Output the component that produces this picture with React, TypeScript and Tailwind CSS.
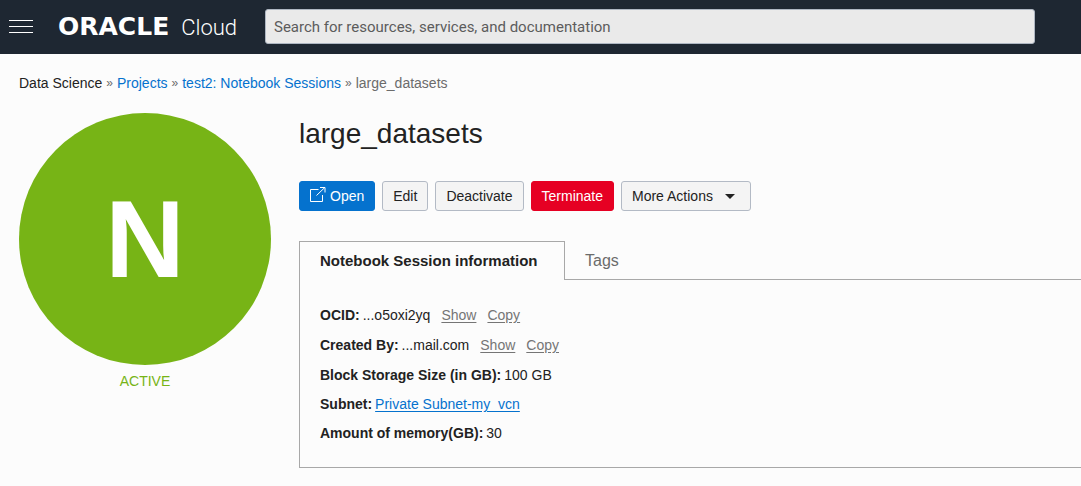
import type { ReactNode } from "react";

const linkMuted = "text-[#757575] underline underline-offset-2";

function Action({ children, className }: { children: ReactNode; className: string }) {
  return (
    <button
      type="button"
      className={`flex h-[30px] items-center whitespace-nowrap rounded-[3px] border px-2.5 ${className}`}
    >
      {children}
    </button>
  );
}

const neutral = "border-[#b3bac5] bg-[#f4f4f4] text-[#222]";

function OpenIcon() {
  return (
    <svg className="mr-1 mb-0.5 size-4" viewBox="0 0 16 16" fill="none" stroke="currentColor" aria-hidden="true">
      <path d="M8.500 2.500H.5v12h12V8M6.500 8.500L14.500 .8M10 .5h5v5" />
    </svg>
  );
}

function Row({ label, children }: { label: string; children: ReactNode }) {
  return (
    <div className="flex items-baseline gap-[3px] leading-5">
      <dt className="font-bold">{label}</dt>
      <dd className="flex gap-[11px]">{children}</dd>
    </div>
  );
}

function MaskedValue({ value }: { value: string }) {
  return (
    <>
      <span className="leading-[21px]">{value}</span>
      <a href="#show" className={linkMuted}>Show</a>
      <a href="#copy" className={linkMuted}>Copy</a>
    </>
  );
}

export default function App() {
  return (
    <div className="min-h-screen bg-[#fcfcfc] font-['Liberation_Sans',Arial,sans-serif] text-sm text-[#222]">
      <header className="flex h-[54px] items-center bg-[#1e2732] pr-[46px] pb-px pl-[9px]">
        <button type="button" aria-label="Open navigation menu" className="mr-[25px] shrink-0 text-white">
          <svg className="block h-[15px] w-6" viewBox="0 0 24 15" fill="currentColor" aria-hidden="true">
            <rect y="1" width="24" height="1" />
            <rect y="7" width="24" height="1" />
            <rect y="13" width="24" height="1" />
          </svg>
        </button>
        <a href="#home" className="flex w-[207px] shrink-0 items-baseline gap-3 whitespace-nowrap text-white">
          <span className="font-['DejaVu_Sans',sans-serif] text-[25px] font-bold">ORACLE</span>
          <span className="font-[Roboto,sans-serif] text-[22px] font-light">Cloud</span>
        </a>
        <input
          type="search"
          aria-label="Search"
          placeholder="Search for resources, services, and documentation"
          className="h-[35px] min-w-0 flex-1 rounded-[3px] border border-[#aeb6c2] bg-[#eaeaea] px-2 font-[Roboto,sans-serif] text-[15px] placeholder:text-[#5c5c5c]"
        />
      </header>

      <nav aria-label="Breadcrumb" className="px-[19px] pt-[19px]">
        <ol className="flex gap-1 whitespace-nowrap leading-5 text-[#6b6b6b]">
          <li className="text-[#222]">Data Science</li>
          <li aria-hidden="true" className="text-xs leading-5">»</li>
          <li><a href="#projects" className="text-[#0572ce]">Projects</a></li>
          <li aria-hidden="true" className="text-xs leading-5">»</li>
          <li><a href="#sessions" className="text-[#0572ce]">test2: Notebook Sessions</a></li>
          <li aria-hidden="true" className="text-xs leading-5">»</li>
          <li aria-current="page">large_datasets</li>
        </ol>
      </nav>

      <main className="flex gap-7 pt-5 pb-[18px] pl-[19px]">
        <aside className="w-[252px] shrink-0 text-center">
          <div className="flex aspect-square items-center justify-center rounded-full bg-[#77b416] text-[110px] leading-none font-bold text-white">
            N
          </div>
          <p className="mt-1.5 leading-5 text-[#77b416]">ACTIVE</p>
        </aside>

        <section className="min-w-0 flex-1">
          <h1 className="text-[28px] leading-[42px]">large_datasets</h1>
          <div className="mt-[26px] flex gap-[7px]">
            <Action className="border-[#0572ce] bg-[#0572ce] text-white">
              <OpenIcon />
              Open
            </Action>
            <Action className={neutral}>Edit</Action>
            <Action className={neutral}>Deactivate</Action>
            <Action className="border-[#e60023] bg-[#e60023] text-white">Terminate</Action>
            <Action className={neutral}>
              More Actions
              <svg className="mr-[5px] ml-3 h-[5px] w-2.5" viewBox="0 0 10 5" fill="currentColor" aria-hidden="true">
                <path d="M0 0h10L5 5z" />
              </svg>
            </Action>
          </div>

          <div role="tablist" className="mt-[30px] flex text-base">
            <button
              type="button"
              role="tab"
              aria-selected="true"
              className="h-[39px] min-w-[266px] whitespace-nowrap border-t border-r border-l border-[#a8a8a8] px-5 text-left text-[15px] font-bold"
            >
              Notebook Session information
            </button>
            <div className="flex flex-1 border-b border-[#a8a8a8]">
              <button type="button" role="tab" aria-selected="false" className="px-5 pt-0.5 text-[#6b6b6b]">
                Tags
              </button>
            </div>
          </div>
          <dl role="tabpanel" className="flex flex-col gap-[9px] border-b border-l border-[#a8a8a8] px-5 pt-[25px] pb-6">
            <Row label="OCID:"><MaskedValue value="...o5oxi2yq" /></Row>
            <Row label="Created By:"><MaskedValue value="...mail.com" /></Row>
            <Row label="Block Storage Size (in GB):">100 GB</Row>
            <Row label="Subnet:">
              <a href="#subnet" className="text-[#0572ce] underline underline-offset-2">Private Subnet-my_vcn</a>
            </Row>
            <Row label="Amount of memory(GB):">30</Row>
          </dl>
        </section>
      </main>
    </div>
  );
}
